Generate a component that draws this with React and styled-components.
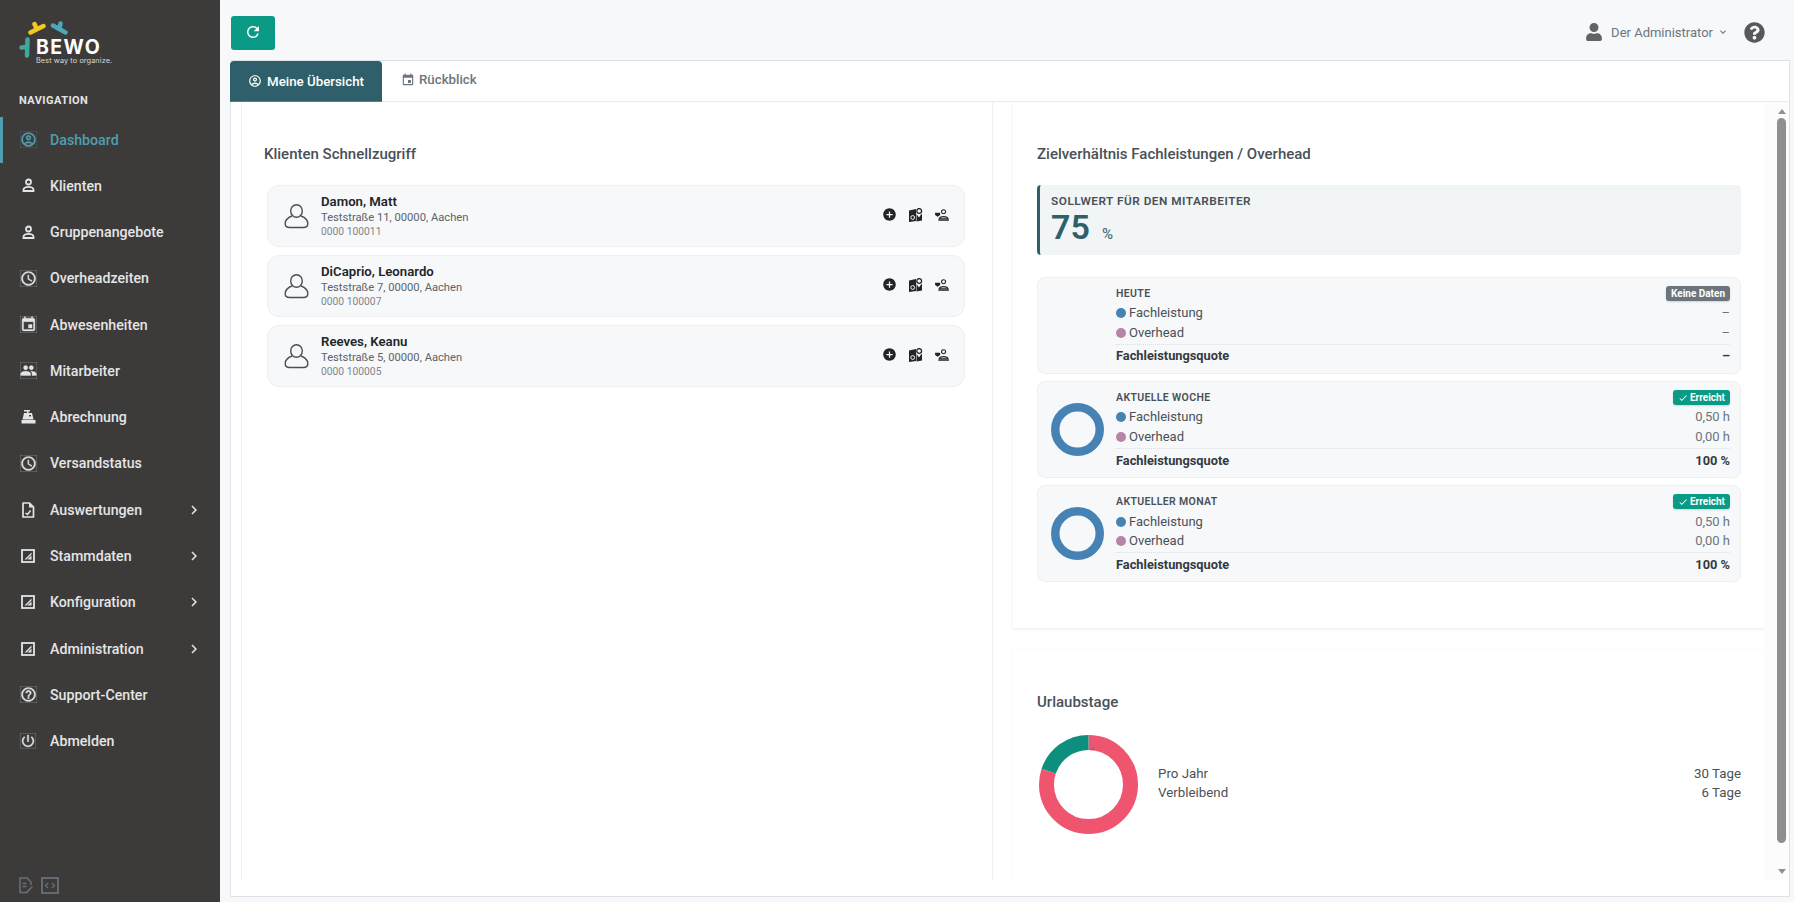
import styled, { createGlobalStyle } from 'styled-components';
import {
  MdOutlineAccountCircle,
  MdOutlineAccessTime,
  MdEvent,
  MdPeople,
  MdOutlineHelpOutline,
  MdPowerSettingsNew,
  MdChevronRight,
  MdRefresh,
  MdAddCircle,
  MdCheck,
  MdExpandMore,
} from 'react-icons/md';
import { FaUser, FaQuestionCircle } from 'react-icons/fa';

const GlobalStyle = createGlobalStyle`
  html, body {
    margin: 0;
    height: 100%;
    overflow: hidden;
    font-family: Roboto, 'Liberation Sans', sans-serif;
    background: #f6f8fa;
  }
`;

const CLIENTS = [
  { name: 'Damon, Matt', address: 'Teststraße 11, 00000, Aachen', phone: '0000 100011' },
  { name: 'DiCaprio, Leonardo', address: 'Teststraße 7, 00000, Aachen', phone: '0000 100007' },
  { name: 'Reeves, Keanu', address: 'Teststraße 5, 00000, Aachen', phone: '0000 100005' },
];

const STATS = [
  { label: 'Heute', badge: 'Keine Daten', fach: '–', over: '–', quote: '–' },
  { label: 'Aktuelle Woche', badge: 'Erreicht', reached: true, fach: '0,50 h', over: '0,00 h', quote: '100 %' },
  { label: 'Aktueller Monat', badge: 'Erreicht', reached: true, fach: '0,50 h', over: '0,00 h', quote: '100 %' },
];

function BoxSlashIcon() {
  return (
    <svg width="14" height="14" viewBox="0 0 14 14">
      <rect x="1" y="1" width="12" height="12" fill="none" stroke="currentColor" strokeWidth="1.8" />
      <path d="M3.5 10.5 L10.5 3.5 L10.5 5.5 L5.5 10.5 Z M6.5 10.5 L10.5 6.5 L10.5 10.5 Z" fill="currentColor" />
    </svg>
  );
}

function FileIcon() {
  return (
    <svg width="14" height="16" viewBox="0 0 14 16">
      <path d="M2 1h6.5L12.5 5v10H2Z" fill="none" stroke="currentColor" strokeWidth="1.7" strokeLinejoin="round" />
      <path d="M8 1v4.5h4.5Z" fill="currentColor" />
      <path d="M4.5 11l2 1.5L9.5 8.5" fill="none" stroke="currentColor" strokeWidth="1.5" />
    </svg>
  );
}

function RegisterIcon() {
  return (
    <svg width="15" height="14" viewBox="0 0 15 14">
      <path d="M3 0h6v1.500H7.500V3H11l1.500 6.500H1.500L3 3h3V1.500H3Z M.5 10h14v3.500H.5Z" fill="currentColor" />
      <rect x="8" y="5" width="2" height="1.400" fill="#3d3b3a" />
    </svg>
  );
}

function PersonBaseIcon() {
  return (
    <svg width="15" height="15" viewBox="0 0 15 15">
      <circle cx="7.500" cy="4" r="2.500" fill="none" stroke="currentColor" strokeWidth="1.800" />
      <path d="M2.500 13v-1.200c0-2 2.800-3 5-3s5 1 5 3V13Z" fill="none" stroke="currentColor" strokeWidth="1.800" />
    </svg>
  );
}

const NAV_ITEMS = [
  { label: 'Dashboard', icon: <MdOutlineAccountCircle size={17} />, active: true },
  { label: 'Klienten', icon: <PersonBaseIcon /> },
  { label: 'Gruppenangebote', icon: <PersonBaseIcon /> },
  { label: 'Overheadzeiten', icon: <MdOutlineAccessTime size={17} /> },
  { label: 'Abwesenheiten', icon: <MdEvent size={17} /> },
  { label: 'Mitarbeiter', icon: <MdPeople size={17} /> },
  { label: 'Abrechnung', icon: <RegisterIcon /> },
  { label: 'Versandstatus', icon: <MdOutlineAccessTime size={17} /> },
  { label: 'Auswertungen', icon: <FileIcon />, more: true },
  { label: 'Stammdaten', icon: <BoxSlashIcon />, more: true },
  { label: 'Konfiguration', icon: <BoxSlashIcon />, more: true },
  { label: 'Administration', icon: <BoxSlashIcon />, more: true },
  { label: 'Support-Center', icon: <MdOutlineHelpOutline size={17} /> },
  { label: 'Abmelden', icon: <MdPowerSettingsNew size={16} /> },
];

function LogoMark() {
  return (
    <svg width="44" height="15" viewBox="0 0 44 15" fill="none" strokeWidth="4.500" strokeLinecap="round">
      <path d="M2.500 11.500 L15.500 5 M6.500 3 L8.500 7.500" stroke="#f3c91d" />
      <path d="M25 4.500 L37.500 11.500 M32.500 2.500 L31.500 7" stroke="#4ba8b8" />
    </svg>
  );
}

function LogoArm() {
  return (
    <svg width="12" height="21" viewBox="0 0 12 21" fill="none" strokeWidth="4.500" strokeLinecap="round">
      <path d="M9.500 2.500 L9 18.500 M3.500 10.500 L9 10" stroke="#3fa89c" />
    </svg>
  );
}

function ClientAvatar() {
  return (
    <svg width="25" height="26" viewBox="0 0 25 26" fill="none" stroke="#4a4f55" strokeWidth="1.400">
      <ellipse cx="12.500" cy="8" rx="5.800" ry="6.300" />
      <path d="M8 13 C4 14.500 1.200 17.500 1.200 20.500 C1.200 23 3 24.500 5.500 24.500 H19.500 C22 24.500 23.800 23 23.800 20.500 C23.800 17.500 21 14.500 17 13" />
    </svg>
  );
}

function MapPinIcon() {
  return (
    <svg width="14" height="14" viewBox="0 0 14 14">
      <path d="M0 2.500 L7 1 V13 L0 14 Z M7.500 6 L10 9.500 L12 6.500 L13 6 V12.500 L7.500 13.500 Z" fill="#212529" />
      <circle cx="3.700" cy="9.500" r="1.900" fill="none" stroke="#f6f8fa" strokeWidth="1" />
      <circle cx="10.200" cy="3" r="2.400" fill="none" stroke="#212529" strokeWidth="1.300" />
    </svg>
  );
}

function PersonHeartIcon() {
  return (
    <svg width="14" height="12" viewBox="0 0 15 13">
      <circle cx="9.200" cy="3" r="2.200" fill="none" stroke="#212529" strokeWidth="1.200" />
      <path d="M4.500 10.500 C5 7.500 13.500 7.500 14 10.500 Z M3.500 12 H15" fill="none" stroke="#212529" strokeWidth="1.200" />
      <path d="M0 4 H5.500 V6.500 L2.800 8.500 L0 6.500 Z" fill="#212529" />
    </svg>
  );
}

function Ring({ size, stroke, parts }) {
  const radius = (size - stroke) / 2;
  const length = 2 * Math.PI * radius;
  let offset = 0;
  return (
    <svg width={size} height={size} viewBox={`0 0 ${size} ${size}`}>
      <g transform={`rotate(-90 ${size / 2} ${size / 2})`}>
        {parts.map((part) => {
          const dash = length * part.share;
          const circle = (
            <circle
              key={part.color}
              cx={size / 2}
              cy={size / 2}
              r={radius}
              fill="none"
              stroke={part.color}
              strokeWidth={stroke}
              strokeDasharray={`${dash} ${length - dash}`}
              strokeDashoffset={-offset}
            />
          );
          offset += dash;
          return circle;
        })}
      </g>
    </svg>
  );
}

function StatCard({ stat }) {
  return (
    <Styled.StatCard>
      <Styled.StatChart>
        {stat.reached && <Ring size={53} stroke={8.5} parts={[{ share: 1, color: '#4682b4' }]} />}
      </Styled.StatChart>
      <Styled.StatBody>
        <Styled.StatHead>
          <Styled.StatLabel>{stat.label}</Styled.StatLabel>
          <Styled.Badge $reached={stat.reached}>
            {stat.reached && <MdCheck size={10} />}
            {stat.badge}
          </Styled.Badge>
        </Styled.StatHead>
        <Styled.StatRow>
          <span><Styled.Dot $color="#4682b4" />Fachleistung</span>
          <Styled.StatValue>{stat.fach}</Styled.StatValue>
        </Styled.StatRow>
        <Styled.StatRow>
          <span><Styled.Dot $color="#b784a7" />Overhead</span>
          <Styled.StatValue>{stat.over}</Styled.StatValue>
        </Styled.StatRow>
        <Styled.QuoteRow>
          <span>Fachleistungsquote</span>
          <span>{stat.quote}</span>
        </Styled.QuoteRow>
      </Styled.StatBody>
    </Styled.StatCard>
  );
}

export default function App() {
  return (
    <Styled.Page>
      <GlobalStyle />
      <Styled.Sidebar>
        <Styled.Logo>
          <Styled.LogoTop><LogoMark /></Styled.LogoTop>
          <Styled.LogoRow>
            <LogoArm />
            <Styled.LogoWords>
              <Styled.LogoName>BEWO</Styled.LogoName>
              <Styled.LogoClaim>Best way to organize.</Styled.LogoClaim>
            </Styled.LogoWords>
          </Styled.LogoRow>
        </Styled.Logo>
        <Styled.NavTitle>NAVIGATION</Styled.NavTitle>
        <nav>
          {NAV_ITEMS.map((item) => (
            <Styled.NavItem key={item.label} $active={item.active}>
              <Styled.NavIcon>{item.icon}</Styled.NavIcon>
              <Styled.NavText>{item.label}</Styled.NavText>
              {item.more && <MdChevronRight size={18} />}
            </Styled.NavItem>
          ))}
        </nav>
        <Styled.SideFooter>
          <svg width="15" height="17" viewBox="0 0 15 17" fill="none" stroke="#68707a" strokeWidth="1.500">
            <path d="M9 15.500H1V1h7l4 4v3" />
            <path d="M3.500 6.500h4 M3.500 9.500h4 M8 15l5.500-5.500" />
          </svg>
          <svg width="18" height="17" viewBox="0 0 18 17" fill="none" stroke="#68707a" strokeWidth="1.800">
            <rect x="1" y="1" width="16" height="15" />
            <path d="M7 6 L4.500 8.500 L7 11 M11 6 L13.500 8.500 L11 11" strokeWidth="1.200" />
          </svg>
        </Styled.SideFooter>
      </Styled.Sidebar>

      <Styled.Main>
        <Styled.Topbar>
          <Styled.RefreshButton><MdRefresh size={18} /></Styled.RefreshButton>
          <Styled.UserArea>
            <FaUser size={18} color="#5f6468" />
            <Styled.UserName>Der Administrator</Styled.UserName>
            <MdExpandMore size={12} color="#6c757d" />
            <Styled.HelpIcon><FaQuestionCircle size={21} color="#55595c" /></Styled.HelpIcon>
          </Styled.UserArea>
        </Styled.Topbar>

        <Styled.Panel>
          <Styled.Tabs>
            <Styled.Tab $active><MdOutlineAccountCircle size={14} />Meine Übersicht</Styled.Tab>
            <Styled.Tab><MdEvent size={14} />Rückblick</Styled.Tab>
          </Styled.Tabs>
          <Styled.Content>
            <Styled.Columns>
              <Styled.LeftCard>
                <Styled.CardTitle>Klienten Schnellzugriff</Styled.CardTitle>
                <Styled.ClientList>
                  {CLIENTS.map((client) => (
                    <Styled.ClientRow key={client.name}>
                      <ClientAvatar />
                      <Styled.ClientInfo>
                        <Styled.ClientName>{client.name}</Styled.ClientName>
                        <Styled.ClientAddress>{client.address}</Styled.ClientAddress>
                        <Styled.ClientPhone>{client.phone}</Styled.ClientPhone>
                      </Styled.ClientInfo>
                      <Styled.ClientActions>
                        <MdAddCircle size={15} color="#212529" />
                        <MapPinIcon />
                        <PersonHeartIcon />
                      </Styled.ClientActions>
                    </Styled.ClientRow>
                  ))}
                </Styled.ClientList>
              </Styled.LeftCard>

              <Styled.RightColumn>
                <Styled.RatioCard>
                  <Styled.CardTitle>Zielverhältnis Fachleistungen / Overhead</Styled.CardTitle>
                  <Styled.TargetBox>
                    <Styled.TargetLabel>Sollwert für den Mitarbeiter</Styled.TargetLabel>
                    <Styled.TargetValue>75<Styled.TargetUnit>%</Styled.TargetUnit></Styled.TargetValue>
                  </Styled.TargetBox>
                  <Styled.StatList>
                    {STATS.map((stat) => <StatCard key={stat.label} stat={stat} />)}
                  </Styled.StatList>
                </Styled.RatioCard>
                <Styled.VacationCard>
                  <Styled.VacationTitle>Urlaubstage</Styled.VacationTitle>
                  <Styled.VacationBody>
                    <Ring
                      size={99}
                      stroke={15}
                      parts={[
                        { share: 0.8, color: '#f0556f' },
                        { share: 0.2, color: '#0d8f7d' },
                      ]}
                    />
                    <Styled.VacationTable>
                      <Styled.VacationRow><span>Pro Jahr</span><span>30 Tage</span></Styled.VacationRow>
                      <Styled.VacationRow><span>Verbleibend</span><span>6 Tage</span></Styled.VacationRow>
                    </Styled.VacationTable>
                  </Styled.VacationBody>
                </Styled.VacationCard>
              </Styled.RightColumn>
            </Styled.Columns>
            <Styled.Scrollbar>
              <Styled.ArrowUp />
              <Styled.Thumb />
              <Styled.ArrowDown />
            </Styled.Scrollbar>
          </Styled.Content>
        </Styled.Panel>
      </Styled.Main>
    </Styled.Page>
  );
}

const Styled = {
  Page: styled.div`
    display: flex;
    height: 902px;
    overflow: hidden;
  `,

  Sidebar: styled.aside`
    width: 220px;
    flex-shrink: 0;
    display: flex;
    flex-direction: column;
    background: #3d3b3a;
    color: #e3e5e6;
  `,

  Logo: styled.div`
    height: 70px;
    padding: 21px 0 0 18px;
    box-sizing: border-box;
  `,

  LogoTop: styled.div`
    display: flex;
    padding-left: 10px;
    height: 15px;
  `,

  LogoRow: styled.div`
    display: flex;
    align-items: flex-start;
    gap: 5px;
    margin-top: 1px;
  `,

  LogoWords: styled.div`
    display: flex;
    flex-direction: column;
    margin-left: 1px;
  `,

  LogoName: styled.span`
    font-family: Inter, sans-serif;
    font-weight: 700;
    font-size: 19.500px;
    line-height: 20px;
    letter-spacing: 1.400px;
    color: #ffffff;
  `,

  LogoClaim: styled.span`
    font-family: Inter, sans-serif;
    font-size: 7.300px;
    line-height: 8px;
    letter-spacing: 0.1px;
    color: #d9d9d9;
  `,

  NavTitle: styled.div`
    margin: 24px 0 0 19px;
    height: 22.500px;
    font-size: 11px;
    line-height: 14px;
    font-weight: 700;
    letter-spacing: 0.45px;
    color: #e3e5e6;
  `,

  NavItem: styled.div`
    display: flex;
    align-items: center;
    height: 46.270px;
    padding: 0 17px 0 18px;
    box-sizing: border-box;
    color: ${(props) => (props.$active ? '#4f9fb0' : '#e3e5e6')};
    box-shadow: ${(props) => (props.$active ? 'inset 3px 0 0 #4f9fb0' : 'none')};
  `,

  NavIcon: styled.span`
    width: 20px;
    margin-right: 12px;
    display: flex;
    justify-content: center;

    svg {
      stroke-width: 0.5px;
    }
  `,

  NavText: styled.span`
    flex: 1;
    font-size: 14.200px;
    font-weight: 500;
  `,

  SideFooter: styled.div`
    margin-top: auto;
    display: flex;
    align-items: center;
    gap: 7px;
    padding: 0 0 8px 19px;
  `,

  Main: styled.main`
    flex: 1;
    min-width: 0;
    display: flex;
    flex-direction: column;
    background: #f6f8fa;
  `,

  Topbar: styled.header`
    height: 60px;
    flex-shrink: 0;
    display: flex;
    align-items: flex-start;
    justify-content: space-between;
    padding: 16px 29px 0 11px;
    box-sizing: border-box;
  `,

  RefreshButton: styled.button`
    width: 44px;
    height: 34px;
    border: none;
    border-radius: 3px;
    display: flex;
    align-items: center;
    justify-content: center;
    padding: 0 0 3px;
    background: #0b9a86;
    color: #ffffff;
  `,

  UserArea: styled.div`
    display: flex;
    align-items: center;
    height: 32px;
    color: #6c757d;
  `,

  UserName: styled.span`
    margin: 0 4px 0 8px;
    font-size: 13px;
  `,

  HelpIcon: styled.span`
    display: flex;
    margin-left: 15px;
  `,

  Panel: styled.section`
    flex: 1;
    min-height: 0;
    margin: 0 4px 5px 10px;
    display: flex;
    flex-direction: column;
    background: #ffffff;
    border: 1px solid #dee2e6;
    border-left-width: 0;
  `,

  Tabs: styled.div`
    height: 40px;
    flex-shrink: 0;
    display: flex;
    border-bottom: 1px solid #e9ecef;
  `,

  Tab: styled.div`
    height: ${(props) => (props.$active ? '41px' : '37px')};
    box-sizing: border-box;
    display: flex;
    align-items: center;
    gap: ${(props) => (props.$active ? '5px' : '4px')};
    padding: ${(props) => (props.$active ? '0 18px' : '0 19px')};
    border-radius: 4px 4px 0 0;
    font-size: 13.300px;
    font-weight: 500;
    color: ${(props) => (props.$active ? '#ffffff' : '#6c757d')};
    background: ${(props) => (props.$active ? '#2f5f6b' : 'transparent')};
    border-bottom: ${(props) => (props.$active ? '1px solid #4682a0' : 'none')};
  `,

  Content: styled.div`
    flex: 1;
    min-height: 0;
    display: flex;
    padding: 0 0 16px 10px;
    border-left: 1px solid #dee2e6;
  `,

  Columns: styled.div`
    width: 1525px;
    display: flex;
    gap: 20px;
    overflow: hidden;
  `,

  LeftCard: styled.div`
    width: 753px;
    box-sizing: border-box;
    padding: 0 24px 0 22px;
    border-left: 1px solid #f0f1f3;
    border-right: 1px solid #f0f1f3;
  `,

  CardTitle: styled.h2`
    margin: 0;
    padding-top: 43px;
    height: 83px;
    box-sizing: border-box;
    font-size: 15px;
    line-height: 18px;
    font-weight: 500;
    color: #495057;
  `,

  ClientList: styled.div`
    display: flex;
    flex-direction: column;
    gap: 8px;
    margin: 0 3px;
  `,

  ClientRow: styled.div`
    height: 62px;
    box-sizing: border-box;
    display: flex;
    align-items: center;
    padding: 0 15px 0 16px;
    background: #f6f8fa;
    border: 1px solid #eceff3;
    border-radius: 12px;
  `,

  ClientInfo: styled.div`
    flex: 1;
    display: flex;
    flex-direction: column;
    margin-left: 12px;
  `,

  ClientName: styled.span`
    margin-bottom: 1px;
    font-size: 13.200px;
    line-height: 16px;
    font-weight: 600;
    color: #212529;
  `,

  ClientAddress: styled.span`
    font-size: 11.200px;
    line-height: 14px;
    color: #5c636a;
  `,

  ClientPhone: styled.span`
    font-size: 10.300px;
    line-height: 14px;
    color: #80868c;
  `,

  ClientActions: styled.div`
    display: flex;
    align-items: center;
    gap: 12px;
    margin-bottom: 3px;
  `,

  RightColumn: styled.div`
    width: 752px;
    display: flex;
    flex-direction: column;
    gap: 22px;
  `,

  RatioCard: styled.div`
    height: 526px;
    flex-shrink: 0;
    box-sizing: border-box;
    padding: 0 23px 0 24px;
    box-shadow: 0 1px 3px rgba(0, 0, 0, 0.09);
  `,

  TargetBox: styled.div`
    height: 70px;
    box-sizing: border-box;
    padding: 8px 11px;
    background: #f2f5f6;
    border-left: 3px solid #2f5f6b;
    border-radius: 4px;
  `,

  TargetLabel: styled.div`
    font-size: 11.800px;
    line-height: 16px;
    font-weight: 600;
    letter-spacing: 0.5px;
    text-transform: uppercase;
    color: #495057;
  `,

  TargetValue: styled.div`
    margin-top: 1px;
    font-size: 34px;
    line-height: 34px;
    font-weight: 600;
    color: #2f5f6b;
  `,

  TargetUnit: styled.span`
    margin-left: 12px;
    font-size: 15px;
    font-weight: 500;
    color: #50707a;
  `,

  StatList: styled.div`
    display: flex;
    flex-direction: column;
    gap: 7.400px;
    margin-top: 22px;
  `,

  StatCard: styled.div`
    height: 96.800px;
    box-sizing: border-box;
    display: flex;
    align-items: center;
    padding: 0 10px 0 13px;
    background: #f6f8fa;
    border: 1px solid #eceff3;
    border-radius: 8px;
  `,

  StatChart: styled.div`
    width: 54px;
    height: 53px;
    margin-right: 11px;
    flex-shrink: 0;
  `,

  StatBody: styled.div`
    flex: 1;
    display: flex;
    flex-direction: column;
  `,

  StatHead: styled.div`
    height: 19px;
    display: flex;
    align-items: center;
    justify-content: space-between;
  `,

  StatLabel: styled.span`
    font-size: 10.500px;
    font-weight: 600;
    letter-spacing: 0.35px;
    text-transform: uppercase;
    color: #495057;
  `,

  Badge: styled.span`
    height: 15px;
    display: flex;
    align-items: center;
    gap: 2px;
    padding: 0 5px;
    border-radius: 3px;
    font-size: 10px;
    font-weight: 700;
    color: #ffffff;
    background: ${(props) => (props.$reached ? '#0b9a86' : '#6c757d')};
    box-shadow: 0 1px 2px rgba(0, 0, 0, 0.15);
  `,

  StatRow: styled.div`
    height: 19.500px;
    display: flex;
    align-items: center;
    justify-content: space-between;
    font-size: 13px;
    color: #495057;
  `,

  Dot: styled.span`
    display: inline-block;
    width: 10px;
    height: 10px;
    margin-right: 3px;
    border-radius: 50%;
    vertical-align: -1px;
    background: ${(props) => props.$color};
  `,

  StatValue: styled.span`
    color: #6c757d;
  `,

  QuoteRow: styled.div`
    height: 22px;
    margin-top: 2px;
    display: flex;
    align-items: center;
    justify-content: space-between;
    border-top: 1px dotted #dadde1;
    font-size: 12.800px;
    font-weight: 700;
    color: #343a40;
  `,

  VacationCard: styled.div`
    flex: 1;
    min-height: 0;
    padding: 0 23px 0 24px;
    box-shadow: 0 0 2px rgba(0, 0, 0, 0.06);
  `,

  VacationTitle: styled.h2`
    margin: 0;
    padding-top: 43px;
    height: 85px;
    box-sizing: border-box;
    font-size: 15px;
    line-height: 18px;
    font-weight: 500;
    color: #495057;
  `,

  VacationBody: styled.div`
    display: flex;
    align-items: center;
    gap: 20px;
    padding-left: 2px;
  `,

  VacationTable: styled.div`
    flex: 1;
    display: flex;
    flex-direction: column;
    margin-bottom: 3px;
  `,

  VacationRow: styled.div`
    height: 19.500px;
    display: flex;
    align-items: center;
    justify-content: space-between;
    font-size: 13.300px;
    color: #495057;
  `,

  Scrollbar: styled.div`
    width: 25px;
    display: flex;
    flex-direction: column;
    align-items: center;
    padding-left: 10px;
    box-sizing: border-box;
    background: #fcfcfc;
  `,

  ArrowUp: styled.div`
    margin-top: 7px;
    border: 4px solid transparent;
    border-top: 0;
    border-bottom: 5px solid #909090;
  `,

  Thumb: styled.div`
    width: 9px;
    height: 725px;
    margin-top: 4px;
    border-radius: 5px;
    background: #8f8f8f;
  `,

  ArrowDown: styled.div`
    margin-top: auto;
    margin-bottom: 6px;
    border: 4px solid transparent;
    border-bottom: 0;
    border-top: 5px solid #909090;
  `,
};
